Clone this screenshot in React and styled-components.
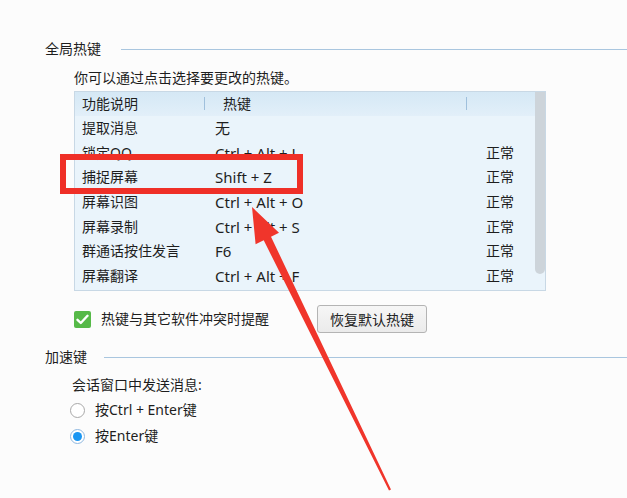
import React from "react";
import styled, { createGlobalStyle } from "styled-components";

const Global = createGlobalStyle`
  html, body { margin: 0; padding: 0; background: #fcfcfc; }
  body {
    font-family: "Noto Sans", "Noto Sans CJK SC", sans-serif;
    font-size: 14px;
    color: #1e1e1e;
  }
`;

const Page = styled.div`
  position: relative;
  width: 627px;
  height: 498px;
  overflow: hidden;
  box-sizing: border-box;
  padding: 39px 0 0 45px;
  background: #fcfcfc;
`;

const Section = styled.section`
  margin-top: ${(p) => p.$top || 0}px;
`;

const SectionHeader = styled.div`
  display: flex;
  align-items: center;
  height: 20px;
  gap: ${(p) => p.$gap}px;
`;

const SectionTitle = styled.span`
  font-size: 14px;
  line-height: 20px;
  white-space: nowrap;
`;

const Rule = styled.div`
  flex: 1;
  height: 1px;
  background: #a9c6df;
`;

const Body = styled.div`
  padding-left: ${(p) => p.$indent}px;
`;

const Hint = styled.div`
  margin-top: ${(p) => p.$top}px;
  line-height: 20px;
  height: 20px;
`;

const Table = styled.div`
  margin-top: 3px;
  width: 472px;
  height: 200px;
  box-sizing: border-box;
  border: 1px solid #c8d8e5;
  background: #eaf4fb;
  display: flex;
`;

const TableMain = styled.div`
  flex: 1;
  display: flex;
  flex-direction: column;
`;

const HeaderRow = styled.div`
  display: grid;
  grid-template-columns: 130px 262px 1fr;
  height: 24px;
  align-items: center;
  background: linear-gradient(#d5e8f5, #e2eff9);
`;

const HeaderCell = styled.div`
  position: relative;
  height: 100%;
  display: flex;
  align-items: center;
  padding-left: ${(p) => p.$pad}px;
  line-height: 20px;
  &::after {
    content: "";
    display: ${(p) => (p.$sep ? "block" : "none")};
    position: absolute;
    right: 0;
    top: 5px;
    height: 13px;
    width: 1px;
    background: #9fc0dc;
  }
`;

const Row = styled.div`
  display: grid;
  grid-template-columns: 130px 262px 1fr;
  height: 24.6px;
  align-items: center;
`;

const Cell = styled.div`
  padding-left: ${(p) => p.$pad}px;
  line-height: 20px;
  white-space: nowrap;
  font-size: ${(p) => (p.$latin ? "15px" : "14px")};
`;

const ScrollTrack = styled.div`
  width: 10px;
  display: flex;
  flex-direction: column;
`;

const ScrollThumb = styled.div`
  height: 182px;
  background: #cdd4da;
  border-radius: 0 0 5px 5px;
`;

const OptionRow = styled.div`
  display: flex;
  align-items: center;
  height: 28px;
  margin-top: 14px;
`;

const CheckBox = styled.div`
  width: 17px;
  height: 17px;
  border-radius: 2px;
  background: #56b948;
  display: flex;
  align-items: center;
  justify-content: center;
`;

const CheckLabel = styled.span`
  margin-left: 10px;
  line-height: 20px;
`;

const Button = styled.button`
  margin-left: 48px;
  width: 110px;
  height: 28px;
  box-sizing: border-box;
  border: 1px solid #b4b4b4;
  border-radius: 3px;
  background: linear-gradient(#f6f6f6, #ebebeb);
  font-family: "Noto Sans", "Noto Sans CJK SC", sans-serif;
  font-size: 14px;
  color: #222;
  padding: 0;
`;

const RadioRow = styled.div`
  display: flex;
  align-items: center;
  height: 26px;
  margin-top: ${(p) => p.$top || 0}px;
`;

const RadioCircle = styled.div`
  width: 15px;
  height: 15px;
  box-sizing: border-box;
  margin-left: -2px;
  border-radius: 50%;
  border: 1px solid ${(p) => (p.$on ? "#8fb8e0" : "#a8a8a8")};
  background: #fff;
  display: flex;
  align-items: center;
  justify-content: center;
  &::after {
    content: "";
    display: ${(p) => (p.$on ? "block" : "none")};
    width: 9px;
    height: 9px;
    border-radius: 50%;
    background: #1a96f2;
  }
`;

const RadioLabel = styled.span`
  margin-left: 10px;
  line-height: 20px;
`;

const HighlightBox = styled.div`
  position: absolute;
  left: 60px;
  top: 154px;
  width: 243px;
  height: 40px;
  box-sizing: border-box;
  border: 6px solid #ef2f27;
  pointer-events: none;
`;

const ArrowSvg = styled.svg`
  position: absolute;
  left: 0;
  top: 0;
  pointer-events: none;
`;

const rows = [
  ["提取消息", "无", ""],
  ["锁定QQ", "Ctrl + Alt + L", "正常"],
  ["捕捉屏幕", "Shift + Z", "正常"],
  ["屏幕识图", "Ctrl + Alt + O", "正常"],
  ["屏幕录制", "Ctrl + Alt + S", "正常"],
  ["群通话按住发言", "F6", "正常"],
  ["屏幕翻译", "Ctrl + Alt + F", "正常"],
];

export default function App() {
  return (
    <>
      <Global />
      <Page>
        <Section>
          <SectionHeader $gap={20}>
            <SectionTitle>全局热键</SectionTitle>
            <Rule />
          </SectionHeader>
          <Body $indent={29}>
            <Hint $top={9}>你可以通过点击选择要更改的热键。</Hint>
            <Table>
              <TableMain>
                <HeaderRow>
                  <HeaderCell $pad={7} $sep>功能说明</HeaderCell>
                  <HeaderCell $pad={18} $sep>热键</HeaderCell>
                  <HeaderCell $pad={19} />
                </HeaderRow>
                {rows.map(([name, key, status]) => (
                  <Row key={name}>
                    <Cell $pad={7}>{name}</Cell>
                    <Cell $pad={10} $latin>{key}</Cell>
                    <Cell $pad={19}>{status}</Cell>
                  </Row>
                ))}
              </TableMain>
              <ScrollTrack>
                <ScrollThumb />
              </ScrollTrack>
            </Table>
            <OptionRow>
              <CheckBox>
                <svg width="13" height="11" viewBox="0 0 13 11">
                  <path d="M1.5 5.8 L4.8 9 L11.5 1.8" fill="none" stroke="#fff" strokeWidth="2.4" strokeLinecap="round" strokeLinejoin="round" />
                </svg>
              </CheckBox>
              <CheckLabel>热键与其它软件冲突时提醒</CheckLabel>
              <Button>恢复默认热键</Button>
            </OptionRow>
          </Body>
        </Section>
        <Section $top={14}>
          <SectionHeader $gap={17}>
            <SectionTitle>加速键</SectionTitle>
            <Rule />
          </SectionHeader>
          <Body $indent={27}>
            <Hint $top={8}>会话窗口中发送消息:</Hint>
            <RadioRow $top={2}>
              <RadioCircle />
              <RadioLabel>按Ctrl + Enter键</RadioLabel>
            </RadioRow>
            <RadioRow>
              <RadioCircle $on />
              <RadioLabel>按Enter键</RadioLabel>
            </RadioRow>
          </Body>
        </Section>
        <HighlightBox />
        <ArrowSvg width="627" height="498" viewBox="0 0 627 498">
          <polygon
            points="252,207 279,232.8 271,236.7 391,489.6 389,490.4 263.7,240.3 255.6,244.2"
            fill="#f0352b"
          />
        </ArrowSvg>
      </Page>
    </>
  );
}
